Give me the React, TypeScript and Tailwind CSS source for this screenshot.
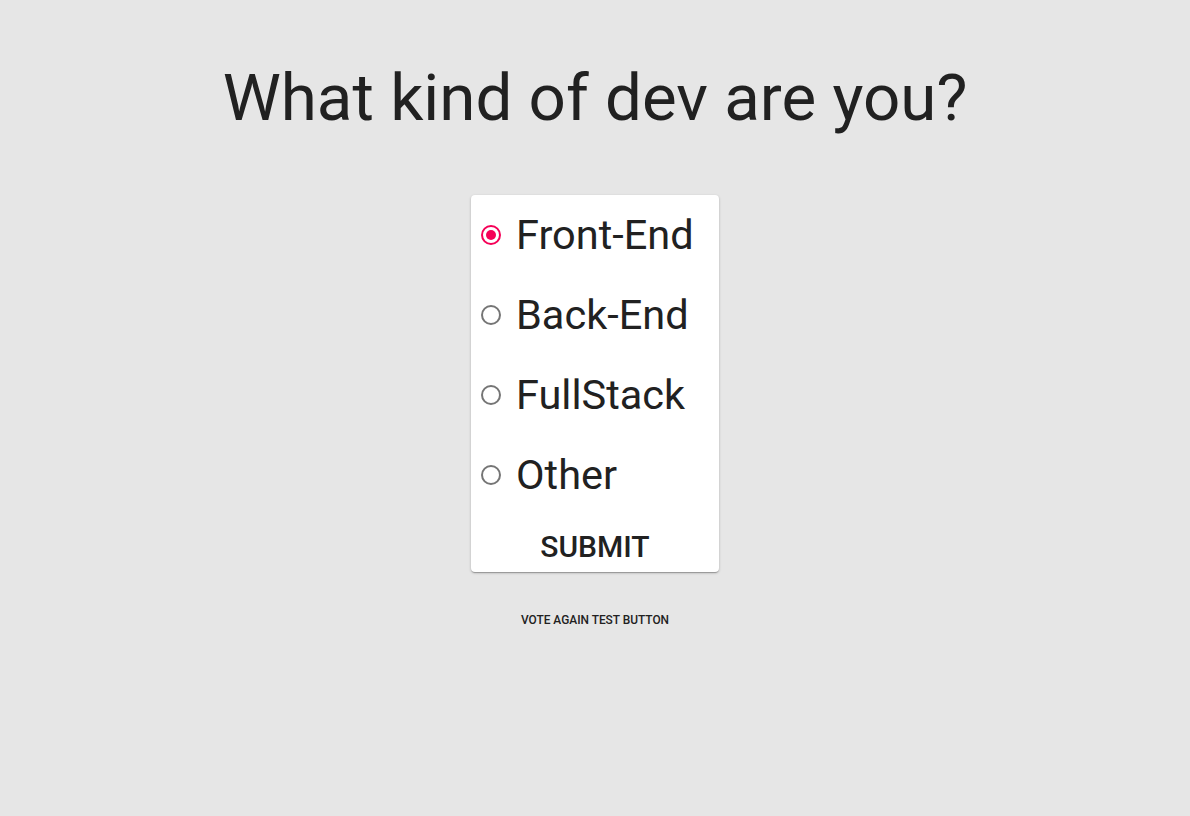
import React, { useState } from 'react';

const OPTIONS = ['Front-End', 'Back-End', 'FullStack', 'Other'];

const Radio: React.FC<{ checked: boolean }> = ({ checked }) => (
  <span
    className={`flex h-[20px] w-[20px] shrink-0 items-center justify-center rounded-full border-2 ${
      checked ? 'border-[#f50057]' : 'border-[#757575]'
    }`}
  >
    {checked && <span className="h-[10px] w-[10px] rounded-full bg-[#f50057]" />}
  </span>
);

export default function App() {
  const [choice, setChoice] = useState('Front-End');

  return (
    <div className="flex min-h-[816px] flex-col items-center bg-[#e6e6e6] font-['Roboto',sans-serif] text-[#212121]">
      <h1 className="mt-[58px] text-[65.5px] leading-[80px] font-normal">What kind of dev are you?</h1>

      {/* poll card */}
      <div className="mt-[57px] flex w-[248px] flex-col rounded-[4px] bg-white shadow-[0_1px_3px_rgba(0,0,0,0.2),0_1px_1px_rgba(0,0,0,0.14),0_2px_1px_-1px_rgba(0,0,0,0.12)]">
        {OPTIONS.map((opt) => (
          <label
            key={opt}
            className="flex h-[80px] cursor-pointer items-center gap-[15px] pl-[10px]"
            onClick={() => setChoice(opt)}
          >
            <Radio checked={choice === opt} />
            <span className="text-[41.5px] leading-none">{opt}</span>
          </label>
        ))}
        <button className="flex h-[57px] items-center justify-center pt-[5px] text-[30px] font-medium uppercase">
          Submit
        </button>
      </div>

      <button className="mt-[40px] text-[11.9px] font-medium uppercase">Vote again test button</button>
    </div>
  );
}
